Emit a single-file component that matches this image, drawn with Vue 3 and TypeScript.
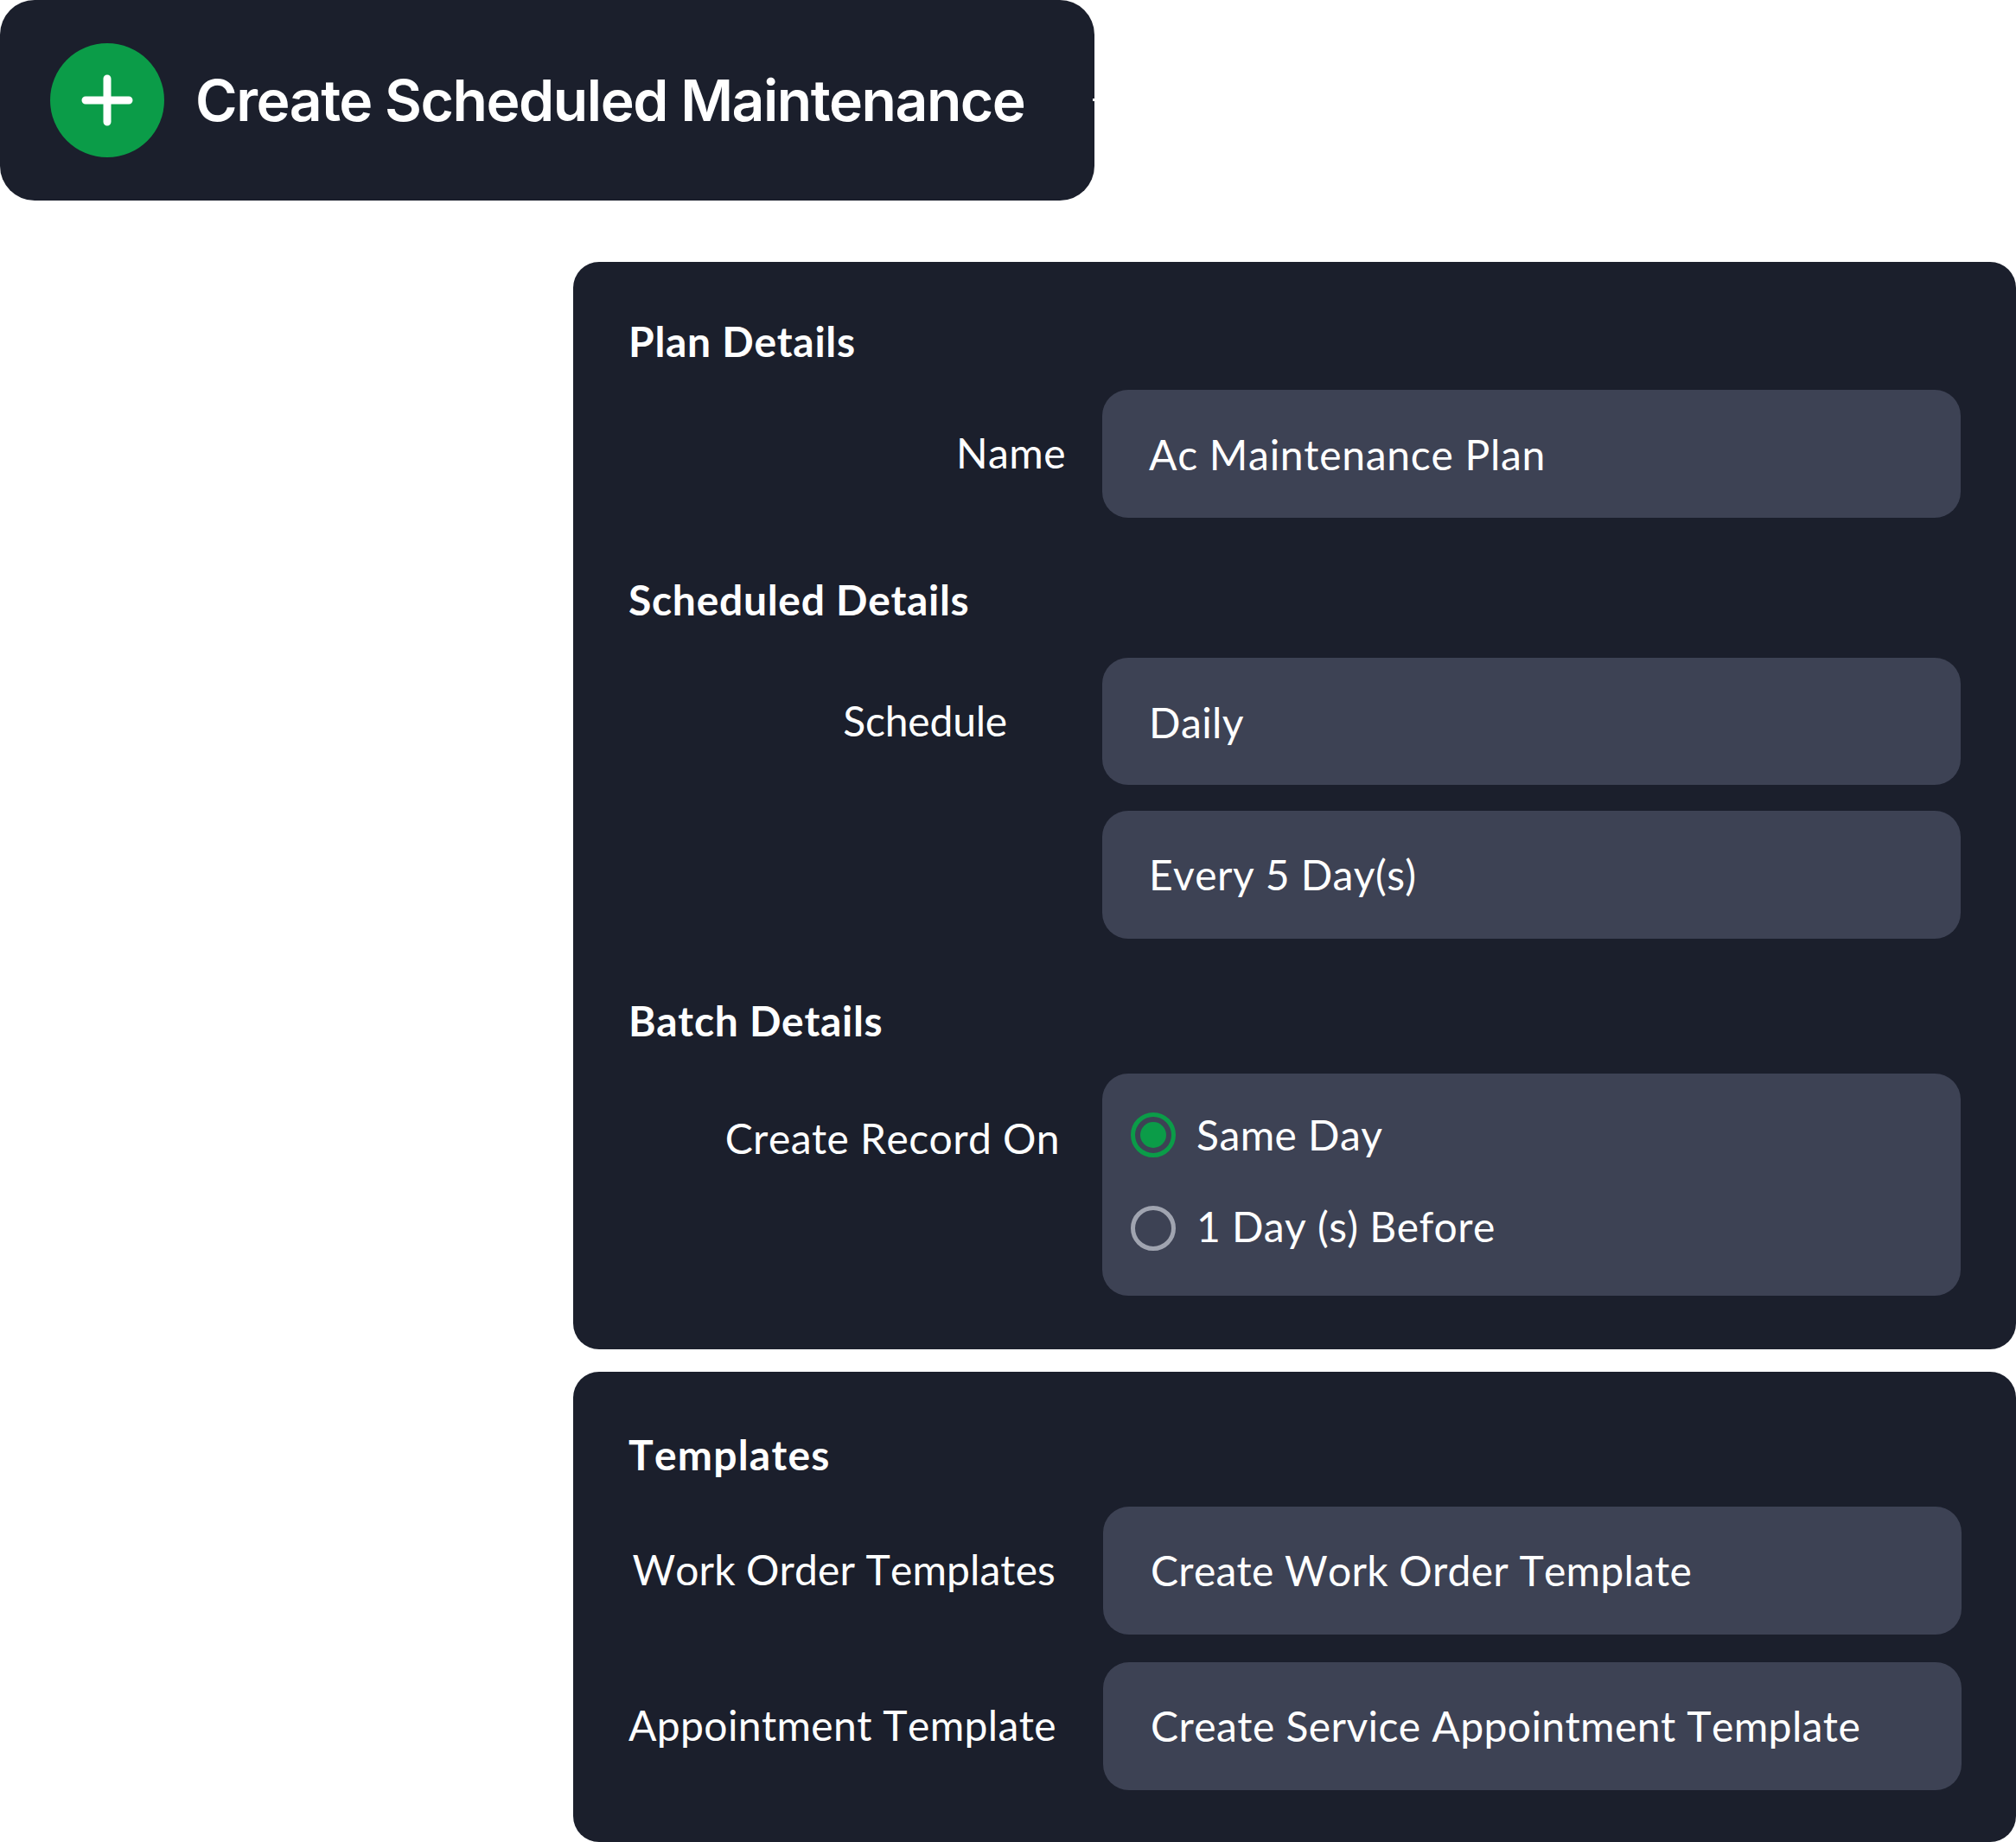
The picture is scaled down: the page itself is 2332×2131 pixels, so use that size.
<script setup lang="ts">
interface Row { label: string; value: string; labelClass: string; valueClass: string }
const templates: Row[] = [
  { label: 'Work Order Templates', value: 'Create Work Order Template', labelClass: 'tight', valueClass: 'tight-value' },
  { label: 'Appointment Template', value: 'Create Service Appointment Template', labelClass: 'appt', valueClass: '' },
]
</script>

<template>
  <div class="page">
    <header class="bar">
      <span class="plus">
        <svg width="60" height="60" viewBox="0 0 60 60" fill="none" stroke="#fff" stroke-width="9" stroke-linecap="round">
          <path d="M30 5v50M5 30h50" />
        </svg>
      </span>
      <span class="bar-title">Create Scheduled Maintenance</span>
      <i class="nick"></i>
    </header>

    <section class="card first">
      <h2 class="title">Plan Details</h2>
      <div class="row after-plan">
        <span class="label pad-name">Name</span>
        <div class="field upper plan-value">Ac Maintenance Plan</div>
      </div>

      <h2 class="title section">Scheduled Details</h2>
      <div class="row after-sched">
        <span class="label pad-schedule">Schedule</span>
        <div class="field upper daily">Daily</div>
      </div>
      <div class="row gap30">
        <span class="label"></span>
        <div class="field upper every">Every 5 Day(s)</div>
      </div>

      <h2 class="title section">Batch Details</h2>
      <div class="row after-batch">
        <span class="label pad-record">Create Record On</span>
        <div class="field radios">
          <div class="radio-row">
            <span class="radio on"><i></i></span>
            <span>Same Day</span>
          </div>
          <div class="radio-row">
            <span class="radio off"></span>
            <span>1 Day (s) Before</span>
          </div>
        </div>
      </div>
    </section>

    <section class="card second">
      <h2 class="title templates-title">Templates</h2>
      <div v-for="(t, i) in templates" :key="t.label" class="row tpl" :class="i === 0 ? 'tpl-first' : 'tpl-next'">
        <span class="label" :class="t.labelClass">{{ t.label }}</span>
        <div class="field" :class="t.valueClass">{{ t.value }}</div>
      </div>
    </section>
  </div>
</template>

<style>
html, body { margin: 0; background: #fff; }
</style>

<style scoped>
.page {
  width: 2332px;
  height: 2131px;
  font-family: Lato, "Liberation Sans", sans-serif;
  font-kerning: none;
  letter-spacing: 0.4px;
  color: #fff;
  overflow: hidden;
}
.bar {
  position: relative;
  width: 1266px;
  height: 232px;
  box-sizing: border-box;
  padding-left: 58px;
  display: flex;
  align-items: center;
  gap: 36px;
  background: #1b1f2c;
  border-radius: 40px;
}
.nick {
  position: absolute;
  right: 0;
  top: 114px;
  width: 2px;
  height: 3px;
  background: #fff;
}
.plus {
  width: 132px;
  height: 132px;
  border-radius: 50%;
  background: #0b9c48;
  display: flex;
  align-items: center;
  justify-content: center;
}
.bar-title {
  font-family: Inter, sans-serif;
  font-kerning: normal;
  font-weight: 600;
  font-size: 66px;
  letter-spacing: -1.45px;
}
.card {
  margin-left: 663px;
  background: #1b1f2c;
  border-radius: 30px;
  box-sizing: border-box;
  padding-left: 64px;
  padding-right: 63px;
}
.first { margin-top: 71px; height: 1258px; padding-top: 62px; }
.second { margin-top: 26px; height: 544px; padding-top: 66px; }
.title {
  margin: 0;
  font-size: 48px;
  line-height: 60px;
  font-weight: 700;
  letter-spacing: 0.7px;
}
.templates-title { letter-spacing: 1.2px; }
.section { margin-top: 65px; }
.row {
  display: grid;
  grid-template-columns: 548px 993px;
}
.after-plan { margin-top: 26px; }
.after-sched { margin-top: 37px; }
.gap30 { margin-top: 30px; }
.after-batch { margin-top: 31px; }
.label {
  font-size: 48px;
  line-height: 60px;
  text-align: right;
  white-space: nowrap;
  align-self: center;
  padding-right: 55px;
  position: relative;
  top: -1px;
}
.pad-name { padding-right: 42px; }
.pad-schedule { padding-right: 110px; letter-spacing: -0.2px; }
.pad-record { padding-right: 49px; align-self: start; margin-top: 46px; }
.tight { letter-spacing: 0.1px; padding-right: 55px; }
.appt { padding-right: 56px; letter-spacing: 0.35px; }
.field {
  height: 148px;
  box-sizing: border-box;
  padding-left: 55px;
  display: flex;
  align-items: center;
  background: #3d4254;
  border-radius: 30px;
  font-size: 48px;
  line-height: 60px;
}
.upper { padding-left: 54px; padding-top: 1px; }
.daily { height: 147px; padding-top: 2px; }
.every { padding-top: 0; }
.plan-value { letter-spacing: 0.7px; }
.tight-value { letter-spacing: 0.22px; }
.radios {
  height: 257px;
  padding: 41px 0 0 33px;
  flex-direction: column;
  align-items: flex-start;
  gap: 46px;
}
.radio-row {
  height: 60px;
  display: flex;
  align-items: center;
  gap: 24px;
}
.radio {
  width: 52px;
  height: 52px;
  box-sizing: border-box;
  border: 5px solid #a0a4b0;
  border-radius: 50%;
  display: flex;
  align-items: center;
  justify-content: center;
}
.radio.on { border-color: #0b9c48; }
.radio.off { margin-top: 3px; }
.radio i {
  width: 30px;
  height: 30px;
  border-radius: 50%;
  background: #0b9c48;
}
.tpl { grid-template-columns: 549px 993px; }
.tpl-first { margin-top: 30px; }
.tpl-next { margin-top: 32px; }
</style>
